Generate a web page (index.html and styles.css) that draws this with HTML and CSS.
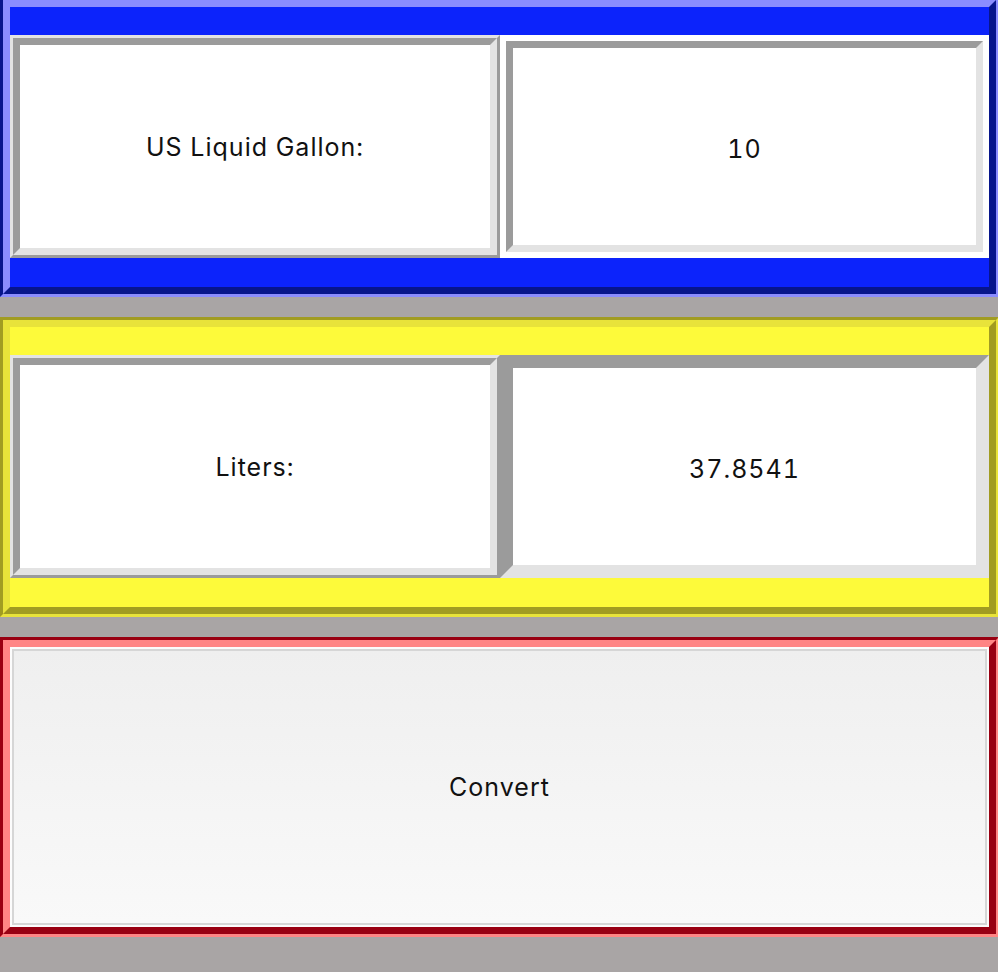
FILE: index.html
```html
<!DOCTYPE html>
<html lang="en">
  <head>
    <meta charset="UTF-8" />
    <meta name="viewport" content="width=device-width, initial-scale=1.0" />
    <title>Gallon Converter</title>
    <link rel="stylesheet" href="styles.css">
  </head>
  <body>
    <main class="window">
      <section class="frame frame--blue">
        <div class="frame__inner">
          <div class="row">
            <div class="label">
              <div class="label__face">US Liquid Gallon:</div>
            </div>
            <div class="entry entry--focus">
              <div class="entry__field">10</div>
            </div>
          </div>
        </div>
      </section>

      <section class="frame frame--yellow">
        <div class="frame__inner">
          <div class="row">
            <div class="label">
              <div class="label__face">Liters:</div>
            </div>
            <div class="entry">
              <div class="entry__field">37.8541</div>
            </div>
          </div>
        </div>
      </section>

      <section class="frame frame--red">
        <div class="frame__inner">
          <button class="button" type="button">
            <span class="button__face">Convert</span>
          </button>
        </div>
      </section>
    </main>
  </body>
</html>
```

FILE: styles.css
```css
:root {
  --window: #a9a5a5;
  --bevel-light: #e3e3e3;
  --bevel-dark: #9b9b9b;
}
*,
*::before,
*::after {
  box-sizing: border-box;
}
html,
body {
  margin: 0;
  height: 100%;
  overflow: hidden;
  background: var(--window);
}
body {
  font-family: Inter, "Liberation Sans", sans-serif;
  font-size: 25px;
  letter-spacing: 1px;
  font-variant-numeric: tabular-nums;
  color: #111;
}

/* Window: three frames stacked, 20px apart */
.window {
  display: flex;
  flex-direction: column;
  gap: 20px;
  width: 999px;
  margin-top: -3px;
}

/* Groove frames: outer 3px (dark top/left), inner 7px (light top/left) */
.frame {
  --bg: #0c23fb;
  --dark: #07158c;
  --light: #8a8cff;
  height: 300px;
  border: 3px solid;
  border-color: var(--dark) var(--light) var(--light) var(--dark);
  background: var(--bg);
}
.frame__inner {
  height: 100%;
  border: 7px solid;
  border-color: var(--light) var(--dark) var(--dark) var(--light);
}
.frame--yellow {
  --bg: #fdfa3a;
  --dark: #a19c22;
  --light: #e8e33a;
}
.frame--red {
  --bg: #ff1a1a;
  --dark: #990012;
  --light: #ff8585;
}

.row {
  display: flex;
  height: 223px;
  margin-top: 28px;
}

/* Label: ridge border */
.label {
  width: 490px;
  border: 3px solid;
  border-color: var(--bevel-light) var(--bevel-dark) var(--bevel-dark) var(--bevel-light);
  background: #fff;
}
.label__face {
  display: flex;
  align-items: center;
  justify-content: center;
  height: 100%;
  border: 7px solid;
  border-color: var(--bevel-dark) var(--bevel-light) var(--bevel-light) var(--bevel-dark);
}

/* Entry: sunken, with a highlight ring */
.entry {
  flex: 1;
  border: 6px solid;
  border-color: var(--bevel-dark) var(--bevel-light) var(--bevel-light) var(--bevel-dark);
}
.entry--focus {
  border-color: #fff;
}
.entry__field {
  display: flex;
  align-items: center;
  justify-content: center;
  height: 100%;
  padding-top: 4px;
  border: 7px solid;
  border-color: var(--bevel-dark) var(--bevel-light) var(--bevel-light) var(--bevel-dark);
  background: #fff;
}

/* Push button */
.button {
  display: block;
  width: 100%;
  height: 100%;
  margin: 0;
  padding: 0;
  border: 2px solid #fcfcfc;
  background: #fcfcfc;
  font: inherit;
  letter-spacing: inherit;
  color: inherit;
  cursor: pointer;
}
.button__face {
  display: flex;
  align-items: center;
  justify-content: center;
  height: 100%;
  border: 2px solid #d6d6d6;
  background: linear-gradient(#efefef, #f9f9f9);
}
```
